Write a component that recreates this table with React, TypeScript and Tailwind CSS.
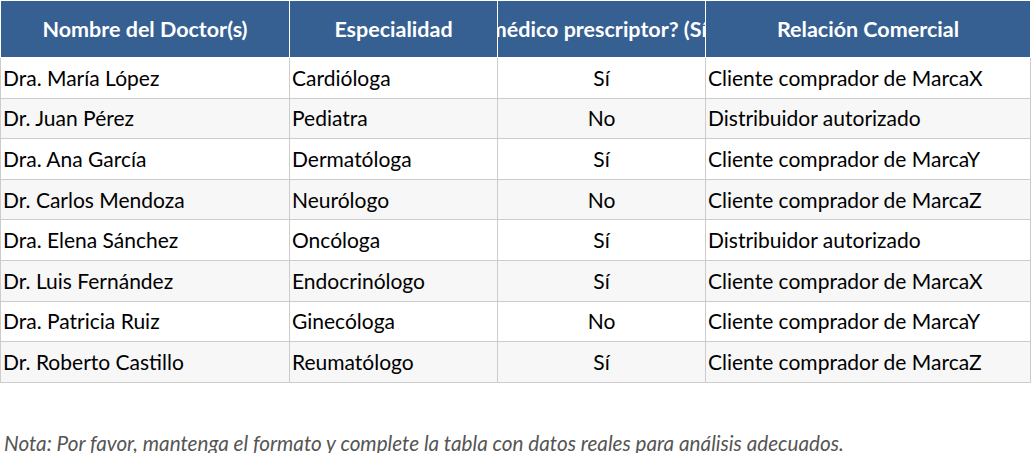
const rows = [
  ['Dra. María López', 'Cardióloga', 'Sí', 'Cliente comprador de MarcaX'],
  ['Dr. Juan Pérez', 'Pediatra', 'No', 'Distribuidor autorizado'],
  ['Dra. Ana García', 'Dermatóloga', 'Sí', 'Cliente comprador de MarcaY'],
  ['Dr. Carlos Mendoza', 'Neurólogo', 'No', 'Cliente comprador de MarcaZ'],
  ['Dra. Elena Sánchez', 'Oncóloga', 'Sí', 'Distribuidor autorizado'],
  ['Dr. Luis Fernández', 'Endocrinólogo', 'Sí', 'Cliente comprador de MarcaX'],
  ['Dra. Patricia Ruiz', 'Ginecóloga', 'No', 'Cliente comprador de MarcaY'],
  ['Dr. Roberto Castillo', 'Reumatólogo', 'Sí', 'Cliente comprador de MarcaZ'],
];

const headers = ['Nombre del Doctor(s)', 'Especialidad', '¿Es médico prescriptor? (Sí/No)', 'Relación Comercial'];

export default function App() {
  return (
    <div className="w-[1031px] h-[453px] bg-white font-['Lato',sans-serif] text-black">
      <table className="table-fixed border-collapse w-[1030px]">
        <colgroup>
          <col className="w-[289px]" />
          <col className="w-[208px]" />
          <col className="w-[208px]" />
          <col className="w-[325px]" />
        </colgroup>
        <thead>
          <tr className="h-[57px]">
            {headers.map((h) => (
              <th
                key={h}
                className="bg-[#366092] text-white font-bold text-[21.5px] text-center whitespace-nowrap overflow-hidden border border-white px-0"
              >
                <div className="flex justify-center overflow-hidden">
                  <span className="shrink-0">{h}</span>
                </div>
              </th>
            ))}
          </tr>
        </thead>
        <tbody>
          {rows.map((r, i) => (
            <tr key={i} className={`h-[40.6px] ${i % 2 === 1 ? 'bg-[#f7f7f7]' : 'bg-white'}`}>
              {r.map((c, j) => (
                <td
                  key={j}
                  className={`border border-[#cccccc] text-[21px] leading-6 px-[2px] whitespace-nowrap overflow-hidden ${j === 2 ? 'text-center' : 'text-left'}`}
                >
                  {c}
                </td>
              ))}
            </tr>
          ))}
        </tbody>
      </table>
      <p className="mt-[46px] pl-[4px] italic text-[20.7px] leading-7 text-[#555555]">
        Nota: Por favor, mantenga el formato y complete la tabla con datos reales para análisis adecuados.
      </p>
    </div>
  );
}
